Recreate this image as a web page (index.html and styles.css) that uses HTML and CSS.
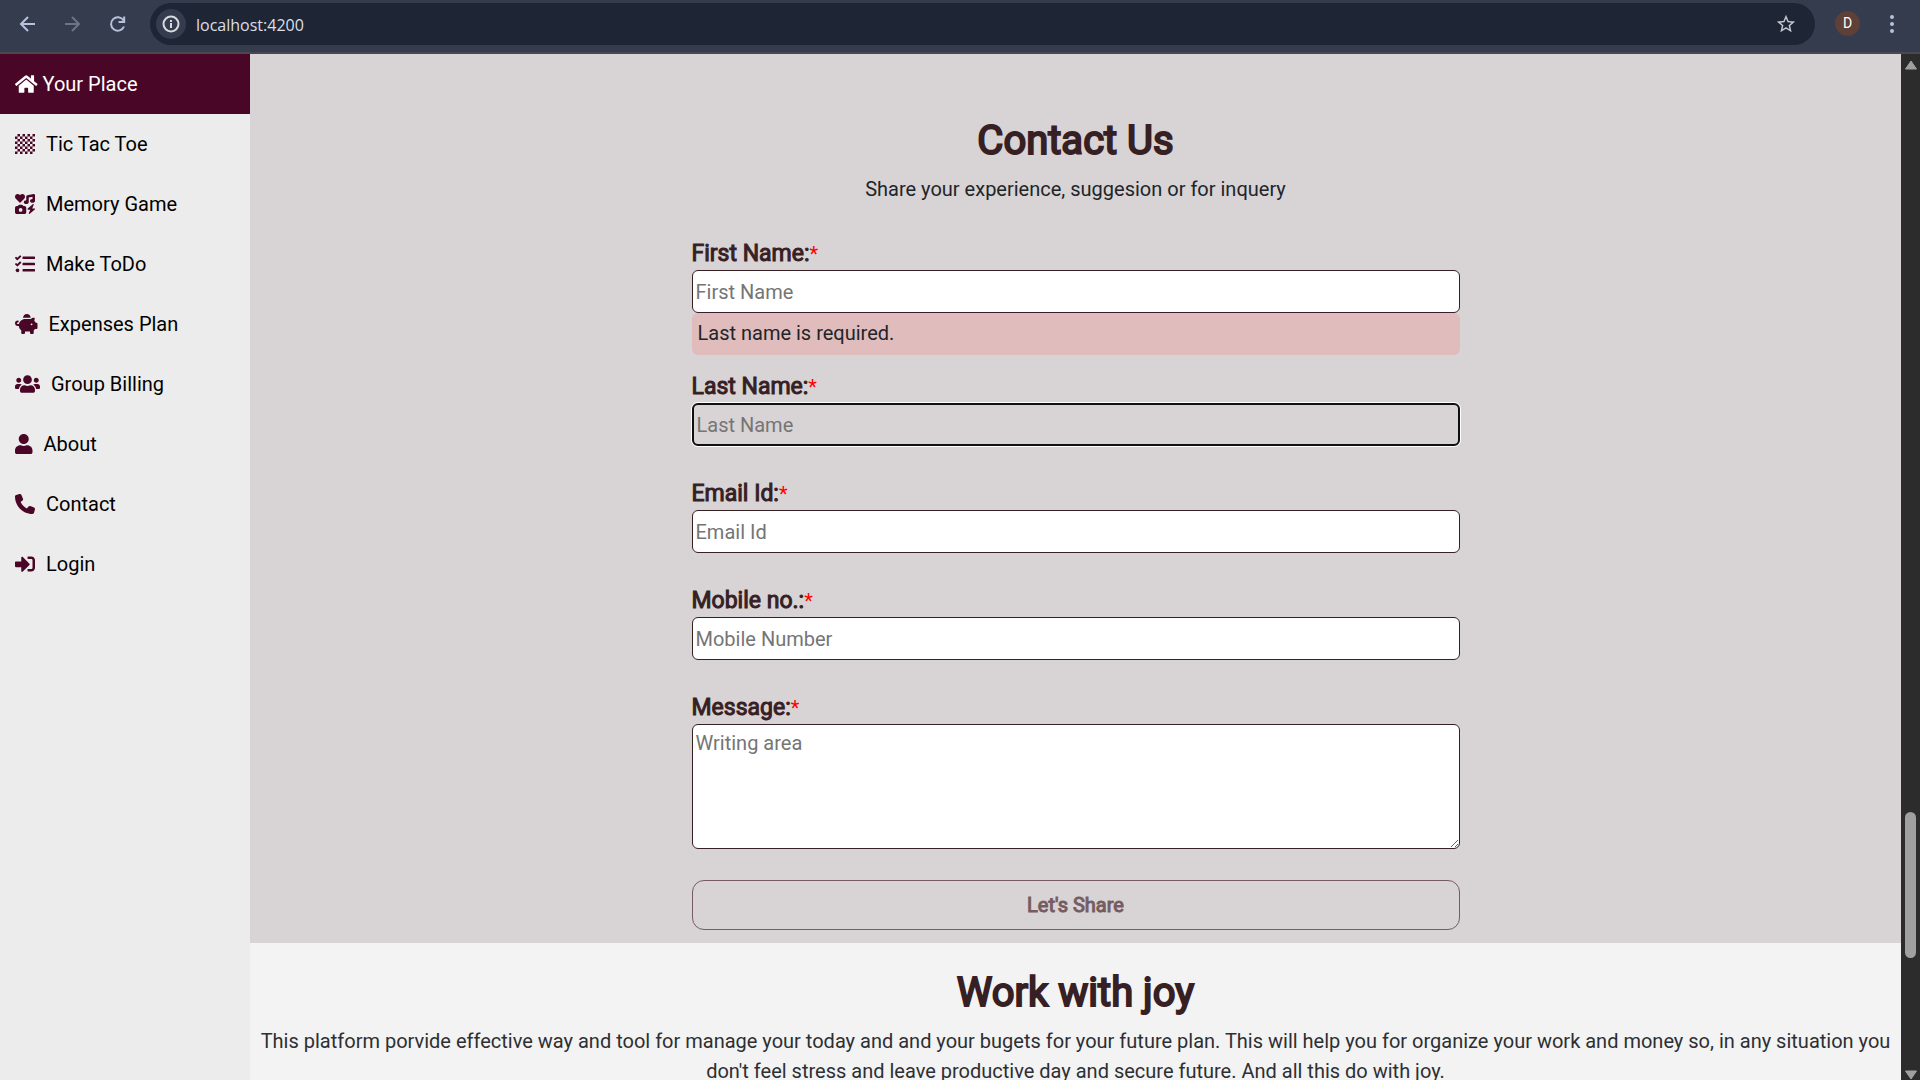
FILE: index.html
```html
<!DOCTYPE html>
<html lang="en">
<head>
<meta charset="utf-8">
<meta name="viewport" content="width=device-width, initial-scale=1">
<title>Your Place</title>
<link rel="stylesheet" href="styles.css">
</head>
<body>
<header class="toolbar">
  <button class="tool" type="button" aria-label="Back"><svg width="20" height="20" viewBox="0 0 20 20" fill="none" stroke="currentColor" stroke-width="2"><path d="M18 10H4M11 3L4 10l7 7"/></svg></button>
  <button class="tool tool-off" type="button" aria-label="Forward" disabled><svg width="20" height="20" viewBox="0 0 20 20" fill="none" stroke="currentColor" stroke-width="2"><path d="M3 10h14M10 3l7 7-7 7"/></svg></button>
  <button class="tool" type="button" aria-label="Reload"><svg width="20" height="20" viewBox="0 0 20 20" fill="none" stroke="currentColor" stroke-width="2"><path d="M17 12.500A6.700 6.700 0 1 1 16.500 6.500M17.200 2.500V8H11.500"/></svg></button>
  <div class="omnibox">
    <button class="site-info" type="button" aria-label="Site information"><svg width="18" height="18" viewBox="0 0 18 18" fill="none" stroke="currentColor" stroke-width="2"><circle cx="9" cy="9" r="7.500"/><path d="M9 8v5M9 5v2"/></svg></button>
    <input class="address" type="text" aria-label="Address" value="localhost:4200">
    <button class="star" type="button" aria-label="Bookmark"><svg width="22" height="22" viewBox="0 0 24 24" fill="currentColor"><path d="M22 9.240l-7.190-.62L12 2 9.190 8.630 2 9.240l5.460 4.730L5.820 21 12 17.270 18.180 21l-1.630-7.030L22 9.240zM12 15.400l-3.760 2.270 1-4.280-3.320-2.880 4.380-.38L12 6.100l1.710 4.040 4.380.38-3.320 2.880 1 4.280L12 15.400z"/></svg></button>
  </div>
  <button class="avatar" type="button" aria-label="Profile">D</button>
  <button class="more" type="button" aria-label="Menu"><svg width="20" height="20" viewBox="0 0 20 20" fill="currentColor"><circle cx="10" cy="3" r="2"/><circle cx="10" cy="10" r="2"/><circle cx="10" cy="17" r="2"/></svg></button>
</header>
<div class="app">
  <nav class="sidebar">
    <a class="brand" href="#"><svg class="icon" viewBox="0 0 576 512"><path d="M280.370 148.260L96 300.110V464a16 16 0 0 0 16 16l112.060-.29a16 16 0 0 0 15.920-16V368a16 16 0 0 1 16-16h64a16 16 0 0 1 16 16v95.640a16 16 0 0 0 16 16.050L464 480a16 16 0 0 0 16-16V300L295.670 148.260a12.190 12.190 0 0 0-15.300 0zM571.600 251.470L488 182.560V44.050a12 12 0 0 0-12-12h-56a12 12 0 0 0-12 12v72.610L318.470 43a48 48 0 0 0-61 0L4.340 251.470a12 12 0 0 0-1.600 16.900l25.500 31A12 12 0 0 0 45.150 301l235.220-193.740a12.190 12.190 0 0 1 15.300 0L530.900 301a12 12 0 0 0 16.900-1.600l25.500-31a12 12 0 0 0-1.700-16.930z"/></svg>Your Place</a>
    <a class="item" href="#"><svg class="icon" viewBox="0 0 8 8"><path d="M1 0h1v1h-1zM3 0h1v1h-1zM5 0h1v1h-1zM7 0h1v1h-1zM0 1h1v1h-1zM2 1h1v1h-1zM4 1h1v1h-1zM6 1h1v1h-1zM1 2h1v1h-1zM3 2h1v1h-1zM5 2h1v1h-1zM7 2h1v1h-1zM0 3h1v1h-1zM2 3h1v1h-1zM4 3h1v1h-1zM6 3h1v1h-1zM1 4h1v1h-1zM3 4h1v1h-1zM5 4h1v1h-1zM7 4h1v1h-1zM0 5h1v1h-1zM2 5h1v1h-1zM4 5h1v1h-1zM6 5h1v1h-1zM1 6h1v1h-1zM3 6h1v1h-1zM5 6h1v1h-1zM7 6h1v1h-1zM0 7h1v1h-1zM2 7h1v1h-1zM4 7h1v1h-1zM6 7h1v1h-1z"/></svg>Tic Tac Toe</a>
    <a class="item" href="#"><svg class="icon" viewBox="0 0 512 512"><path d="M500.300 7.300C507.700 13.300 512 22.400 512 32l0 144c0 26.500-28.700 48-64 48s-64-21.500-64-48s28.700-48 64-48l0-57L352 90.200 352 208c0 26.500-28.700 48-64 48s-64-21.500-64-48s28.700-48 64-48l0-96c0-15.300 10.800-28.400 25.700-31.400l160-32c9.400-1.900 19.100 .6 26.600 6.600zM74.700 304l11.800-17.800c5.900-8.900 15.900-14.200 26.600-14.200l61.700 0c10.700 0 20.700 5.300 26.600 14.200L213.300 304l26.700 0c26.500 0 48 21.500 48 48l0 112c0 26.500-21.500 48-48 48L48 512c-26.500 0-48-21.500-48-48L0 352c0-26.500 21.500-48 48-48l26.700 0zM192 408a48 48 0 1 0-96 0 48 48 0 1 0 96 0zM478.700 278.300L440.300 368l55.700 0c6.700 0 12.600 4.100 15 10.400s.6 13.300-4.400 17.700l-128 112c-5.600 4.900-13.900 5.300-19.900 .9s-8.200-12.400-5.300-19.200L391.700 400 336 400c-6.700 0-12.600-4.100-15-10.400s-.6-13.300 4.400-17.700l128-112c5.600-4.900 13.900-5.300 19.900-.9s8.200 12.400 5.300 19.200zm-339-59.200c-6.500 6.500-17 6.500-23 0L19.900 119.200c-28-29-26.500-76.900 5-103.900c27-23.500 68.400-19 93.400 6.500l10 10.500 9.500-10.500c25-25.500 65.900-30 93.900-6.500c31 27 32.500 74.900 4.500 103.900l-96.400 99.900z"/></svg>Memory Game</a>
    <a class="item" href="#"><svg class="icon" viewBox="0 0 512 512"><path d="M139.610 35.500a12 12 0 0 0-17 0L58.930 98.810l-22.700-22.120a12 12 0 0 0-17 0L3.530 92.410a12 12 0 0 0 0 17l47.590 47.400a12.780 12.780 0 0 0 17.610 0l15.590-15.620L156.520 69a12.090 12.090 0 0 0 .09-17zm0 159.190a12 12 0 0 0-17 0l-63.680 63.720-22.700-22.100a12 12 0 0 0-17 0L3.530 252a12 12 0 0 0 0 17L51 316.500a12.770 12.770 0 0 0 17.600 0l15.700-15.690 72.200-72.220a12 12 0 0 0 .09-16.900zM64 368c-26.490 0-48.590 21.500-48.590 48S37.530 464 64 464a48 48 0 0 0 0-96zm432 16H208a16 16 0 0 0-16 16v32a16 16 0 0 0 16 16h288a16 16 0 0 0 16-16v-32a16 16 0 0 0-16-16zm0-320H208a16 16 0 0 0-16 16v32a16 16 0 0 0 16 16h288a16 16 0 0 0 16-16V80a16 16 0 0 0-16-16zm0 160H208a16 16 0 0 0-16 16v32a16 16 0 0 0 16 16h288a16 16 0 0 0 16-16v-32a16 16 0 0 0-16-16z"/></svg>Make ToDo</a>
    <a class="item" href="#"><svg class="icon" viewBox="0 0 576 512"><path d="M400 96l0 .7c-5.300-.4-10.600-.7-16-.7L256 96c-16.500 0-32.500 2.100-47.800 6c-.1-2-.2-4-.2-6c0-53 43-96 96-96s96 43 96 96zm-16 32c3.500 0 7 .1 10.400 .3c4.200 .3 8.400 .7 12.600 1.300C424.600 109.100 450.800 96 480 96l11.500 0c10.400 0 18 9.800 15.500 19.900l-13.800 55.200c15.800 14.800 28.700 32.800 37.500 52.900l13.300 0c17.700 0 32 14.300 32 32l0 96c0 17.700-14.300 32-32 32l-32 0c-9.100 12.100-19.900 22.900-32 32l0 64c0 17.700-14.300 32-32 32l-32 0c-17.700 0-32-14.300-32-32l0-32-128 0 0 32c0 17.700-14.300 32-32 32l-32 0c-17.700 0-32-14.300-32-32l0-64c-34.900-26.200-58.700-66.300-63.200-112L68 304c-37.600 0-68-30.400-68-68s30.400-68 68-68l4 0c13.300 0 24 10.700 24 24s-10.700 24-24 24l-4 0c-11 0-20 9-20 20s9 20 20 20l31.200 0c12.100-59.800 57.700-107.500 116.300-122.800c12.900-3.400 26.500-5.200 40.500-5.200l128 0zm64 136a24 24 0 1 0-48 0 24 24 0 1 0 48 0z"/></svg>Expenses Plan</a>
    <a class="item" href="#"><svg class="icon" viewBox="0 0 640 512"><path d="M96 224c35.300 0 64-28.700 64-64s-28.700-64-64-64-64 28.700-64 64 28.700 64 64 64zm448 0c35.300 0 64-28.700 64-64s-28.700-64-64-64-64 28.700-64 64 28.700 64 64 64zm32 32h-64c-17.600 0-33.500 7.100-45.100 18.600 40.300 22.100 68.900 62 75.100 109.400h66c17.700 0 32-14.300 32-32v-32c0-35.300-28.700-64-64-64zm-256 0c61.900 0 112-50.100 112-112S381.900 32 320 32 208 82.100 208 144s50.100 112 112 112zm76.800 32h-8.300c-20.800 10-43.900 16-68.500 16s-47.600-6-68.500-16h-8.300C179.600 288 128 339.600 128 403.200V432c0 26.500 21.500 48 48 48h288c26.500 0 48-21.500 48-48v-28.800c0-63.600-51.600-115.200-115.200-115.200zm-223.700-13.400C161.500 263.100 145.600 256 128 256H64c-35.300 0-64 28.700-64 64v32c0 17.700 14.300 32 32 32h65.900c6.300-47.400 34.900-87.300 75.200-109.400z"/></svg>Group Billing</a>
    <a class="item" href="#"><svg class="icon" viewBox="0 0 448 512"><path d="M224 256c70.700 0 128-57.300 128-128S294.700 0 224 0 96 57.300 96 128s57.300 128 128 128zm89.600 32h-16.700c-22.200 10.200-46.900 16-72.900 16s-50.600-5.800-72.900-16h-16.700C60.200 288 0 348.200 0 422.400V464c0 26.500 21.500 48 48 48h352c26.500 0 48-21.500 48-48v-41.600c0-74.200-60.200-134.400-134.400-134.400z"/></svg>About</a>
    <a class="item" href="#"><svg class="icon" viewBox="0 0 512 512"><path d="M164.900 24.600c-7.700-18.600-28-28.500-47.400-23.200l-88 24C12.100 30.200 0 46 0 64C0 311.400 200.600 512 448 512c18 0 33.800-12.100 38.600-29.500l24-88c5.300-19.400-4.600-39.700-23.200-47.400l-96-40c-16.300-6.800-35.200-2.100-46.300 11.600L304.700 368C234.300 334.700 177.300 277.700 144 207.300L193.300 167c13.700-11.200 18.400-30 11.600-46.300l-40-96z"/></svg>Contact</a>
    <a class="item" href="#"><svg class="icon" viewBox="0 0 512 512"><path d="M416 448h-84c-6.600 0-12-5.400-12-12v-40c0-6.600 5.400-12 12-12h84c17.700 0 32-14.300 32-32V160c0-17.700-14.300-32-32-32h-84c-6.600 0-12-5.400-12-12V76c0-6.600 5.400-12 12-12h84c53 0 96 43 96 96v192c0 53-43 96-96 96zm-47-201L201 79c-15-15-41-4.500-41 17v96H24c-13.300 0-24 10.700-24 24v96c0 13.300 10.700 24 24 24h136v96c0 21.500 26 32 41 17l168-168c9.300-9.400 9.300-24.600 0-34z"/></svg>Login</a>
  </nav>
  <main class="content">
    <section class="contact">
      <h1 class="title">Contact Us</h1>
      <p class="lead">Share your experience, suggesion or for inquery</p>
      <form class="form">
        <div class="field field-error">
          <label class="label" for="first">First Name:<span class="req">*</span></label>
          <input class="input" id="first" type="text" placeholder="First Name">
          <p class="error">Last name is required.</p>
        </div>
        <div class="field">
          <label class="label" for="last">Last Name:<span class="req">*</span></label>
          <input class="input input-focus" id="last" type="text" placeholder="Last Name">
        </div>
        <div class="field">
          <label class="label" for="email">Email Id:<span class="req">*</span></label>
          <input class="input" id="email" type="email" placeholder="Email Id">
        </div>
        <div class="field">
          <label class="label" for="mobile">Mobile no.:<span class="req">*</span></label>
          <input class="input" id="mobile" type="tel" placeholder="Mobile Number">
        </div>
        <div class="field">
          <label class="label" for="message">Message:<span class="req">*</span></label>
          <textarea class="input area" id="message" placeholder="Writing area"></textarea>
        </div>
        <button class="submit" type="button">Let's Share</button>
      </form>
    </section>
    <section class="about">
      <h2 class="title">Work with joy</h2>
      <p class="text">This platform porvide effective way and tool for manage your today and and your bugets for your future plan. This will help you for organize your work and money so, in any situation you don't feel stress and leave productive day and secure future. And all this do with joy.</p>
    </section>
  </main>
  <div class="scrollbar">
    <svg class="arrow" width="14" height="10" viewBox="0 0 14 10"><path d="M7 1L12.500 9h-11z" fill="#a0a0a0" stroke="#a0a0a0" stroke-linejoin="round"/></svg>
    <div class="track"><div class="thumb"></div></div>
    <svg class="arrow" width="14" height="10" viewBox="0 0 14 10"><path d="M7 9L12.500 1h-11z" fill="#a0a0a0" stroke="#a0a0a0" stroke-linejoin="round"/></svg>
  </div>
</div>
</body>
</html>
```
FILE: styles.css
```css
* { box-sizing: border-box; }
body {
  margin: 0;
  height: 100vh;
  overflow: hidden;
  display: flex;
  flex-direction: column;
  font: 20px/30px Roboto, sans-serif;
  color: #212529;
}
h1, h2, p { margin: 0; }
button { border: 0; padding: 0; background: none; font: inherit; color: inherit; }
svg { display: block; flex: none; }

.toolbar {
  flex: none;
  display: flex;
  align-items: center;
  height: 54px;
  padding: 0 17px 5px;
  background: #343c4d;
  border-bottom: 2px solid #48484d;
  color: #b6c2dc;
}
.tool { width: 20px; margin-right: 25px; }
.tool-off { color: #6d7585; }
.omnibox {
  flex: 1;
  display: flex;
  align-items: center;
  height: 42px;
  margin-left: -2px;
  padding: 0 18px 0 6px;
  border-radius: 21px;
  background: #1e2636;
}
.site-info {
  display: grid;
  place-items: center;
  width: 30px;
  height: 30px;
  border-radius: 50%;
  background: #343c4d;
  color: #d8dae0;
}
.address {
  flex: 1;
  border: 0;
  padding: 2px 10px 0;
  background: none;
  font: 16px/24px "Open Sans", "Noto Sans", sans-serif;
  color: #dcdfe6;
}
.star { color: #c4c8d2; }
.avatar {
  width: 25px;
  height: 25px;
  margin-left: 20px;
  border-radius: 50%;
  background: #5f4037;
  color: #fff;
  font-size: 14px;
  line-height: 25px;
}
.more { margin: 0 1px 0 22px; }

.app { flex: 1; min-height: 0; display: flex; }
.sidebar { flex: none; width: 250px; background: #ececec; }
.brand, .item {
  display: flex;
  align-items: center;
  gap: 11px;
  padding: 15px;
  color: #000;
  text-decoration: none;
}
.brand { gap: 5px; background: #4a0627; color: #fff; }
.icon { height: 20px; fill: #4a0627; }
.brand .icon { fill: #fff; }

.content { flex: 1; min-width: 0; overflow: hidden; background: #f3f3f3; text-align: center; }
.contact { padding: 63px 10px 13px; background: #d8d3d4; }
.title {
  margin-bottom: 9px;
  font-size: 40px;
  line-height: 48px;
  font-weight: 400;
  color: #362024;
  -webkit-text-stroke: 2px #362024;
}
.form { width: 768px; max-width: 100%; margin: 33px auto 0; text-align: left; }
.field { display: flex; flex-direction: column; margin-bottom: 31px; }
.field-error { margin-bottom: 15px; }
.label {
  font-size: 23px;
  line-height: 33px;
  color: #362024;
  -webkit-text-stroke: 1px #362024;
}
.req { font-size: 20px; line-height: 20px; color: #f00; -webkit-text-stroke: 0; }
.input {
  width: 100%;
  height: 43px;
  padding: 2px 3px;
  border: 1px solid #362024;
  border-radius: 6px;
  background: #fff;
  font: inherit;
  color: #212529;
}
.input::placeholder { color: #757575; }
.input-focus { border: 2px solid #101010; background: transparent; box-shadow: 0 0 0 1px #fff; }
.area { height: 125px; padding-top: 3px; resize: vertical; }
.error { padding: 5px 6px 7px; border-radius: 6px; background: #e1bcbc; }
.submit {
  width: 100%;
  height: 50px;
  border: 1px solid #765c62;
  border-radius: 12px;
  color: #765c62;
  -webkit-text-stroke: 1px #765c62;
}
.about { padding: 26px 10px; }
.text { color: #2d2f33; }

.scrollbar {
  flex: none;
  display: flex;
  flex-direction: column;
  align-items: center;
  width: 19px;
  padding: 6px 0 0;
  background: #2c2c2c;
}
.track { flex: 1; width: 11px; }
.thumb { height: 146px; margin-top: 742px; border-radius: 6px; background: #a0a0a0; }
```
